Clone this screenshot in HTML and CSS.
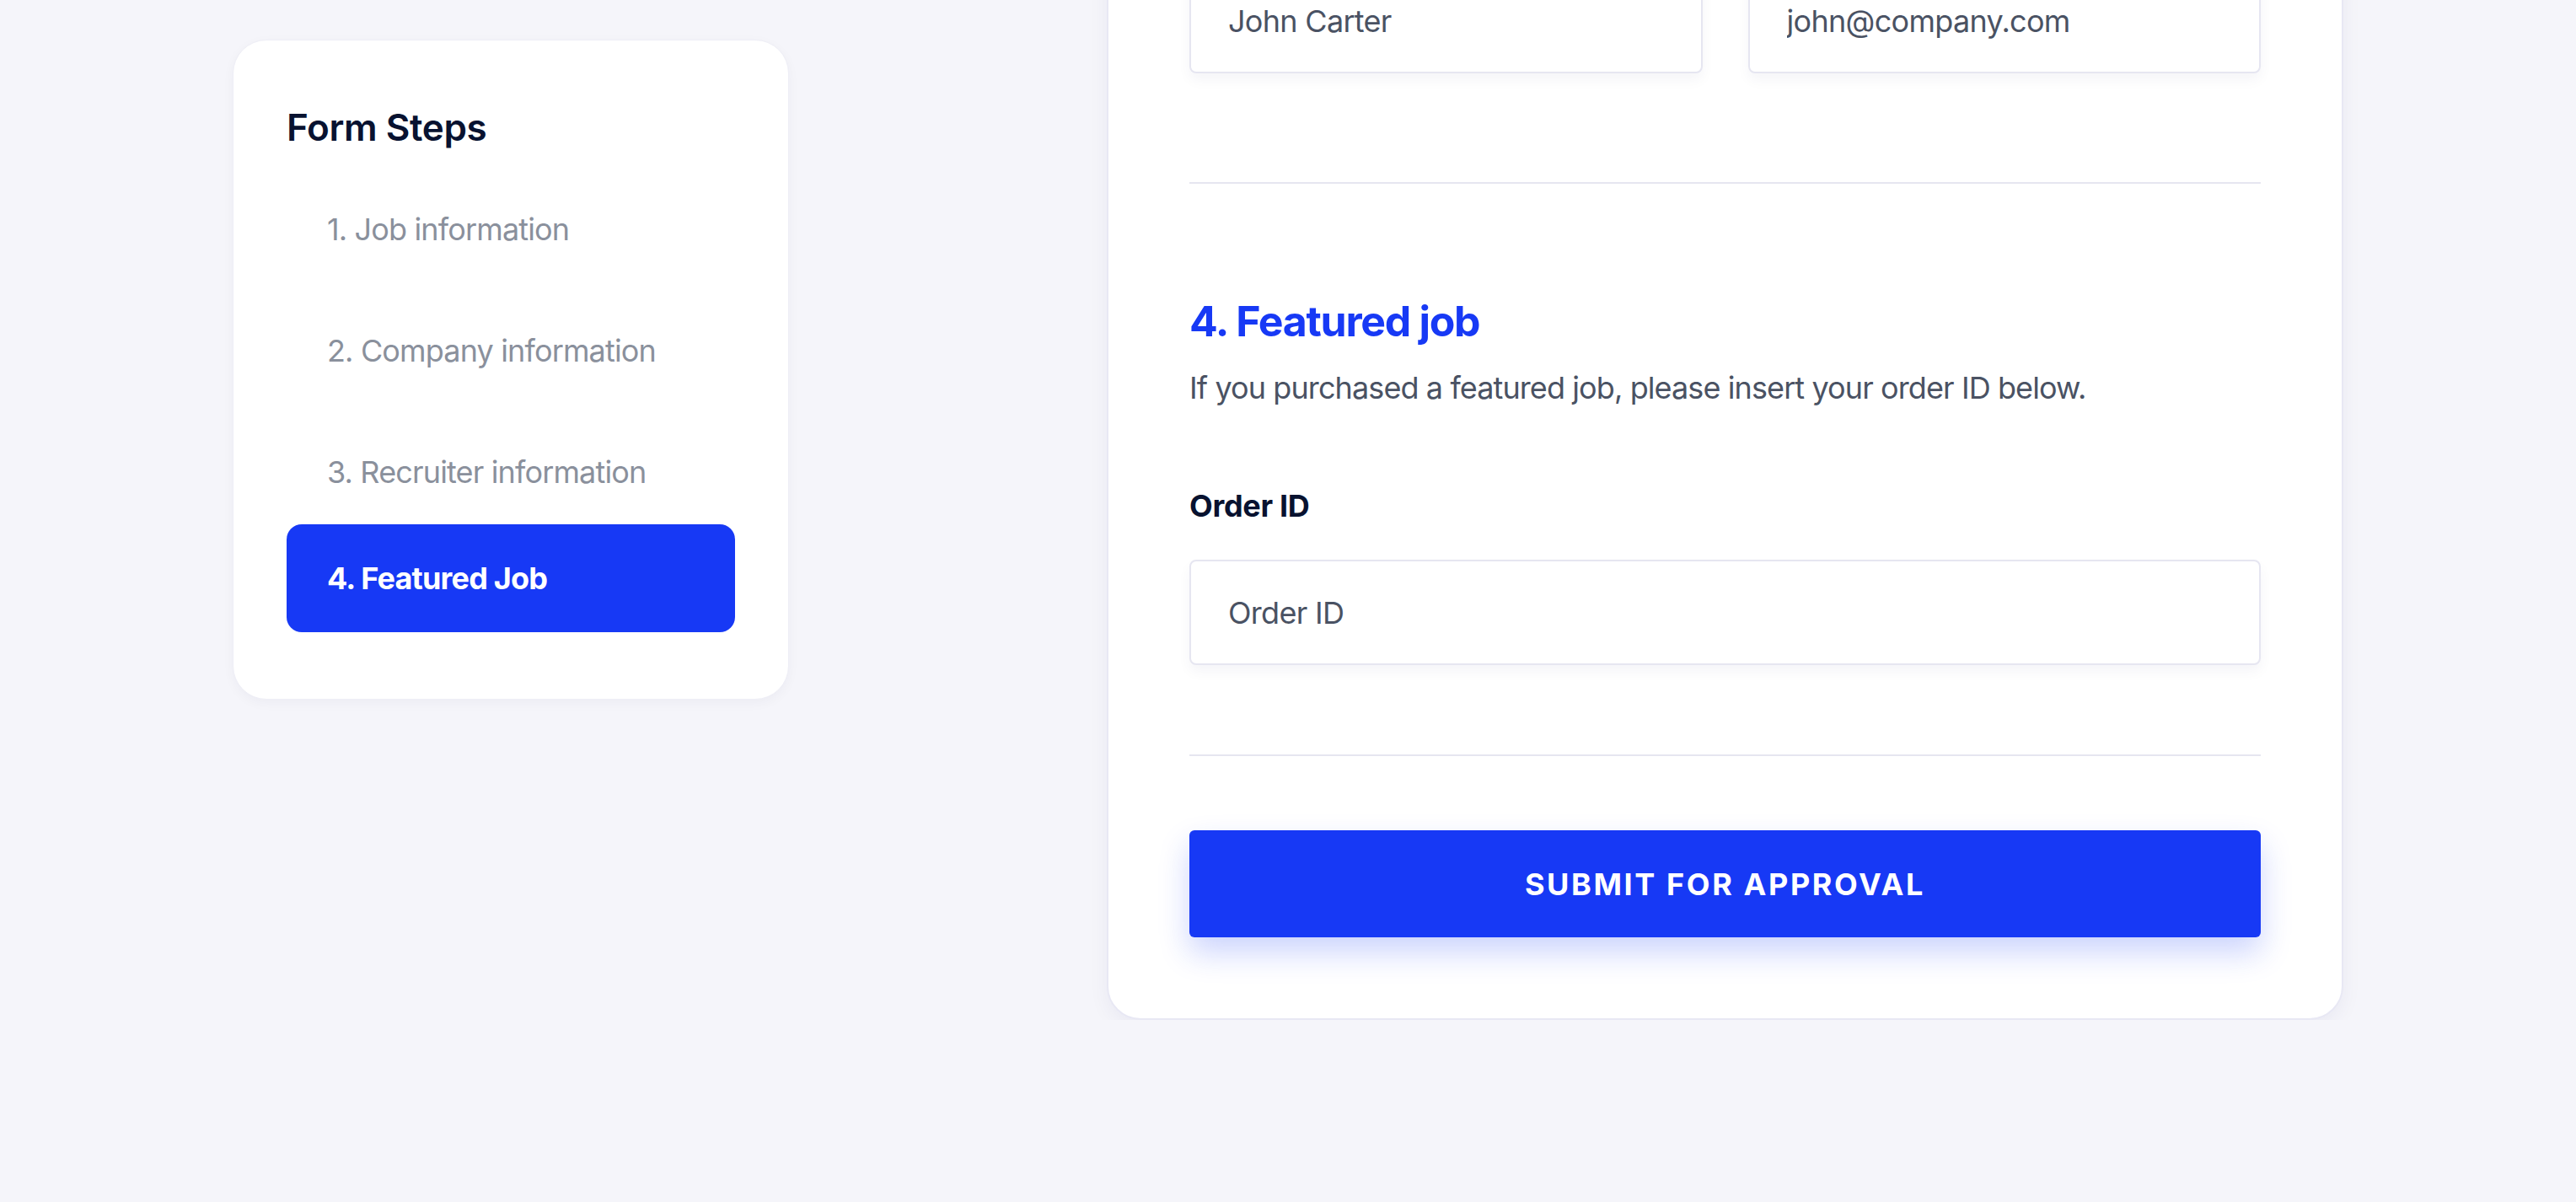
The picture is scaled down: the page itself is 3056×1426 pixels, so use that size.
FILE: index.html
```html
<!DOCTYPE html>
<html lang="en">
<head>
<meta charset="utf-8">
<title>Post a job – Featured job</title>
<link rel="stylesheet" href="styles.css">
</head>
<body>
<div class="page">
  <aside class="steps-card">
    <h2 class="steps-title">Form Steps</h2>
    <nav class="steps">
      <a class="step">1. Job information</a>
      <a class="step">2. Company information</a>
      <a class="step">3. Recruiter information</a>
      <a class="step step-active">4. Featured Job</a>
    </nav>
  </aside>

  <main class="form-card">
    <div class="field-row">
      <input class="field" type="text" value="John Carter">
      <input class="field" type="email" value="john@company.com">
    </div>
    <div class="divider divider-first"></div>

    <section class="featured">
      <h3 class="section-title">4. Featured job</h3>
      <p class="section-text">If you purchased a featured job, please insert your order ID below.</p>
      <label class="field-label" for="order">Order ID</label>
      <input class="field field-order" id="order" type="text" placeholder="Order ID">
    </section>

    <div class="divider divider-second"></div>
    <button class="submit" type="button">Submit for approval</button>
  </main>
</div>
</body>
</html>
```

FILE: styles.css
```css
* {
  box-sizing: border-box;
}

html,
body {
  margin: 0;
  padding: 0;
  background: #f5f5fa;
  font-family: Inter, "Noto Sans", "Liberation Sans", sans-serif;
  overflow: hidden;
}

.page {
  width: 2504px;
  margin: 0 auto;
  display: grid;
  grid-template-columns: 660px 1467px;
  justify-content: space-between;
  align-items: start;
}

/* ---------- Sidebar ---------- */

.steps-card {
  margin-top: 47px;
  background: #ffffff;
  border: 1px solid #eeeef6;
  border-radius: 40px;
  padding: 77px 63px 79px;
  box-shadow: 0 4px 14px rgba(20, 20, 80, 0.04);
}

.steps-title {
  margin: 0;
  font-size: 44px;
  line-height: 53px;
  font-weight: 600;
  letter-spacing: -0.4px;
  color: #081230;
}

.steps {
  margin-top: 30px;
  display: flex;
  flex-direction: column;
  gap: 16px;
}

.step {
  display: flex;
  align-items: center;
  height: 128px;
  padding-left: 48px;
  border-radius: 18px;
  font-size: 36px;
  font-weight: 400;
  letter-spacing: -0.85px;
  color: #8a909c;
  text-decoration: none;
}

.step-active {
  margin-top: -18px;
  background: #1739f5;
  color: #ffffff;
  font-weight: 700;
  letter-spacing: -0.8px;
}

/* ---------- Main form card ---------- */

.form-card {
  margin-top: -136px;
  background: #ffffff;
  border: 2px solid #e8e8f4;
  border-radius: 40px;
  padding: 96px;
  box-shadow: 0 8px 24px rgba(20, 20, 90, 0.05);
}

.field-row {
  display: grid;
  grid-template-columns: 1fr 1fr;
  gap: 54px;
}

.field {
  display: block;
  width: 100%;
  height: 125px;
  margin: 0;
  padding: 0 44px;
  background: #ffffff;
  border: 2px solid #e6e6f1;
  border-radius: 8px;
  box-shadow: 0 8px 16px rgba(25, 25, 90, 0.045);
  font-family: inherit;
  font-size: 36px;
  letter-spacing: -0.7px;
  color: #4a5263;
  outline: none;
}

.field::placeholder {
  color: #4a5263;
  opacity: 1;
}

.divider {
  height: 2px;
  background: #e6e6f0;
}

.divider-first {
  margin-top: 129px;
}

.featured {
  display: flex;
  flex-direction: column;
}

.section-title {
  margin: 133px 0 0;
  font-size: 50px;
  line-height: 60px;
  font-weight: 700;
  letter-spacing: -1.3px;
  color: #1739f5;
}

.section-text {
  margin: 22px 0 0;
  font-size: 36px;
  line-height: 54px;
  letter-spacing: -0.9px;
  color: #4a5263;
}

.field-label {
  margin-top: 91px;
  font-size: 36px;
  line-height: 44px;
  font-weight: 700;
  letter-spacing: -0.3px;
  color: #081230;
}

.field-order {
  margin-top: 42px;
}

.divider-second {
  margin-top: 106px;
}

.submit {
  display: block;
  width: 100%;
  height: 127px;
  margin-top: 88px;
  border: 0;
  border-radius: 6px;
  background: #1739f5;
  color: #ffffff;
  font-family: inherit;
  font-size: 36px;
  font-weight: 700;
  letter-spacing: 2.6px;
  text-transform: uppercase;
  box-shadow: 0 18px 36px rgba(23, 57, 245, 0.22);
  cursor: pointer;
}
```
